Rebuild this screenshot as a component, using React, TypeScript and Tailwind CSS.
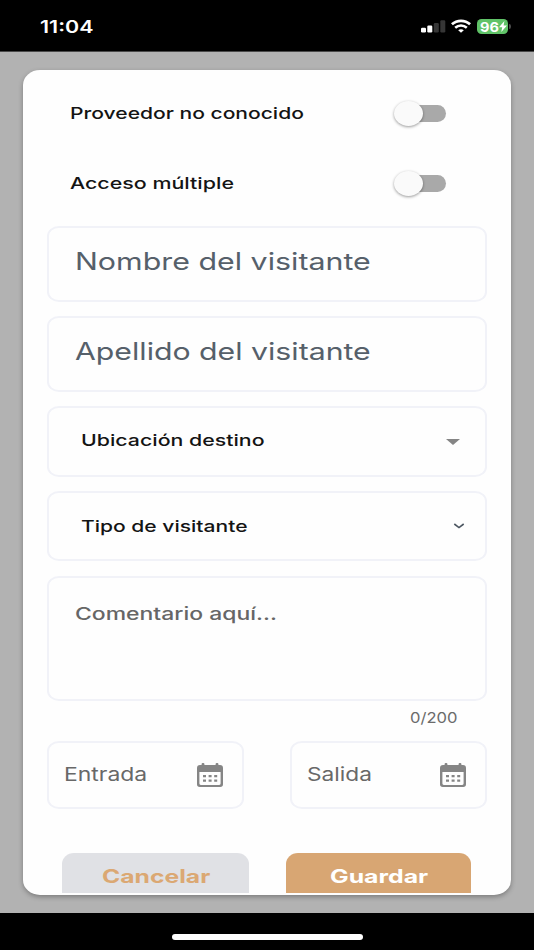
import { useLayoutEffect, useRef, useState } from "react";
import type { ReactNode } from "react";

const TOGGLES = [
  { label: "Proveedor no conocido", width: 233.5 },
  { label: "Acceso múltiple", width: 163.5 },
];

const DATES = [
  { label: "Entrada", width: 83 },
  { label: "Salida", width: 65 },
];

export default function App() {
  return (
    <div className="flex h-[950px] w-[534px] flex-col overflow-hidden bg-[#b2b2b2] font-['Inter','Liberation_Sans',sans-serif]">
      <StatusBar />

      <main className="flex-1 px-[23px] pt-[18px]">
        <div className="flex h-[825px] flex-col overflow-hidden rounded-[17px/15px] bg-[#fefefe] px-6 pt-2 shadow-[0_2px_5px_rgba(0,0,0,0.3)]">
          {TOGGLES.map((toggle) => (
            <ToggleRow key={toggle.label} {...toggle} />
          ))}

          {/* Text inputs */}
          <Field className="mt-2 h-[76px] items-center pb-[5px] pl-[26px]">
            <WideText width={296} className="text-[24px] text-[#56606a]">
              Nombre del visitante
            </WideText>
          </Field>
          <Field className="mt-3.5 h-[76px] items-center pb-[5px] pl-[26px]">
            <WideText width={296} className="text-[24px] text-[#56606a]">
              Apellido del visitante
            </WideText>
          </Field>

          {/* Selects */}
          <Field className="mt-3.5 h-[71px] items-center justify-between pr-[25px] pb-[3px] pl-8">
            <WideText width={183.5} className="text-[16.5px] font-[550] text-[#141414]">
              Ubicación destino
            </WideText>
            <svg width="14" height="6" viewBox="0 0 14 6" className="mt-[3px]">
              <path d="M0 0h14L7 6z" fill="#858585" />
            </svg>
          </Field>
          <Field className="mt-3.5 h-[70px] items-center justify-between pr-5 pb-px pl-8">
            <WideText width={167} className="text-[16.5px] font-[550] text-[#141414]">
              Tipo de visitante
            </WideText>
            <svg width="12" height="6" viewBox="0 0 12 6" className="mt-px" fill="none">
              <path d="M1.300 1 6 4.600 10.700 1" stroke="#4b5560" strokeWidth="1.600" />
            </svg>
          </Field>

          {/* Comment box */}
          <Field className="mt-[15px] h-[125px] items-start pt-[22px] pl-[26px]">
            <WideText width={202.5} className="text-[17px] font-[550] text-[#666666]">
              Comentario aquí...
            </WideText>
          </Field>
          <div className="flex h-10 shrink-0 justify-end pt-[3px] pr-[29px]">
            <WideText width={48} className="text-[14.5px] text-[#6b6b6b]">
              0/200
            </WideText>
          </div>

          {/* Dates */}
          <div className="flex justify-between">
            {DATES.map((date) => (
              <Field key={date.label} className="h-[68px] w-[197px] items-center justify-between pr-[19px] pb-[2px] pl-[15px]">
                <WideText width={date.width} className="text-[18.5px] text-[#686868]">
                  {date.label}
                </WideText>
                <CalendarIcon />
              </Field>
            ))}
          </div>

          {/* Actions */}
          <div className="mt-[43.5px] flex h-10 shrink-0 justify-between overflow-hidden pr-4 pl-[15px]">
            <button className="flex h-14 w-[187px] justify-center rounded-[12px/11px] bg-[#e0e1e5] pt-[9.5px]">
              <WideText width={108} className="text-[18.5px] font-[650] text-[#dba873]">
                Cancelar
              </WideText>
            </button>
            <button className="flex h-14 w-[185px] justify-center rounded-[12px/11px] bg-[#d8a673] pt-[9.5px]">
              <WideText width={98} className="text-[18.5px] font-bold text-white">
                Guardar
              </WideText>
            </button>
          </div>
        </div>
      </main>

      <footer className="flex h-[37px] justify-center bg-black pt-[21px]">
        <div className="h-[6px] w-[191px] rounded-full bg-white" />
      </footer>
    </div>
  );
}

// Text set wider than the font draws it, stretched to the given width
function WideText({ width, className = "", children }: { width: number; className?: string; children: ReactNode }) {
  const ref = useRef<HTMLSpanElement>(null);
  const [scale, setScale] = useState(1);

  useLayoutEffect(() => {
    if (ref.current) setScale(width / ref.current.offsetWidth);
  }, [width]);

  return (
    <span className={`flex h-7 shrink-0 items-center ${className}`} style={{ width }}>
      <span
        ref={ref}
        className="block shrink-0 origin-left leading-7 whitespace-nowrap"
        style={{ transform: `scaleX(${scale})` }}
      >
        {children}
      </span>
    </span>
  );
}

function StatusBar() {
  return (
    <header className="flex h-[52px] shrink-0 justify-between border-b border-[#4a4a4a] bg-black pr-[23px] pl-10">
      <div className="pt-[13px]">
        <WideText width={53} className="text-[17px] font-semibold text-white">
          11:04
        </WideText>
      </div>
      <div className="flex items-start pt-[19px]">
        <svg width="25" height="15" viewBox="0 0 25 15" className="mr-[5px]">
          <rect x="0" y="8.800" width="5" height="4.700" rx="1.200" fill="#fff" />
          <rect x="6.300" y="6.500" width="5" height="7" rx="1.200" fill="#fff" />
          <rect x="12.800" y="4" width="5" height="9.500" rx="1.200" fill="#363636" />
          <rect x="19.300" y="1.300" width="5" height="12.200" rx="1.200" fill="#363636" />
        </svg>
        <svg width="20" height="15" viewBox="0 0 20 15" className="mr-[6px]" fill="none" stroke="#fff">
          <path d="M.9 5.300C6 .6 14 .6 19.100 5.300" strokeWidth="2.800" />
          <path d="M4.200 8.700c3.300-2.900 8.300-2.900 11.600 0" strokeWidth="2.600" />
          <path d="M7.200 11.300c1.600-1.500 4-1.500 5.600 0L10 13.800z" fill="#fff" stroke="none" />
        </svg>
        <div className="flex h-[15px] w-[31px] items-center rounded-[4.5px] bg-[#60c368] pl-[3px]">
          <WideText width={19} className="text-[13px] font-bold text-white">
            96
          </WideText>
          <svg width="8" height="11" viewBox="0 0 8 11" className="shrink-0">
            <path d="M5.400 0 0 6.200h3.200L2.300 11 8 4.600H4.600z" fill="#fff" />
          </svg>
        </div>
        <div className="mt-[5px] ml-px h-[5px] w-[2px] rounded-r-full bg-[#4a4a4a]" />
      </div>
    </header>
  );
}

function ToggleRow({ label, width }: { label: string; width: number }) {
  return (
    <div className="flex h-[70px] shrink-0 items-center justify-between pr-[41px] pl-[23px]">
      <WideText width={width} className="text-[16.5px] font-[550] text-[#141414]">
        {label}
      </WideText>
      <div className="mt-[1px] flex h-[17px] w-[46px] items-center rounded-full bg-[#a9a9a9]">
        <div className="-ml-[6px] h-[25px] w-[29px] shrink-0 rounded-[50%] bg-[#fafafa] shadow-[0_1px_3px_rgba(0,0,0,0.4)]" />
      </div>
    </div>
  );
}

function Field({ className = "", children }: { className?: string; children: ReactNode }) {
  return <div className={`flex shrink-0 rounded-[12px/10px] border-2 border-[#f1f2f8] ${className}`}>{children}</div>;
}

function CalendarIcon() {
  return (
    <svg width="26" height="24" viewBox="0 0 26 24" className="mt-[2px] shrink-0" fill="#858585">
      <rect x="4.600" y="0" width="2.800" height="4" rx="1" />
      <rect x="18.600" y="0" width="2.800" height="4" rx="1" />
      <path
        fillRule="evenodd"
        d="M3 2h20a3 3 0 0 1 3 3v16.200a2.800 2.800 0 0 1-2.800 2.800H2.800A2.800 2.800 0 0 1 0 21.200V5a3 3 0 0 1 3-3zM2.400 9v11.600a1.400 1.400 0 0 0 1.400 1.400h18.400a1.400 1.400 0 0 0 1.400-1.400V9z"
      />
      <path d="M6 12h3v2.200H6zM11.600 12h3v2.200h-3zM17.200 12h3v2.200h-3zM6 16.600h3v2.200H6zM11.600 16.600h3v2.200h-3zM17.200 16.600h3v2.200h-3z" />
    </svg>
  );
}
